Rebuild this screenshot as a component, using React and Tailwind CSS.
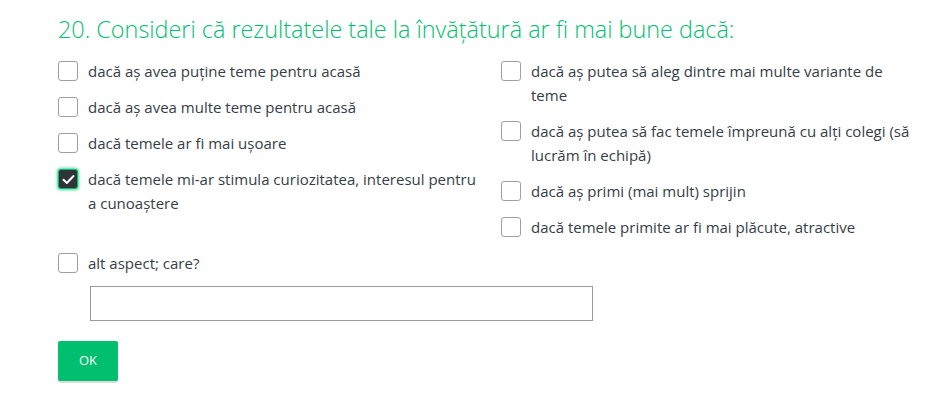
import { useState } from 'react';

const LEFT = [
  'dacă aș avea puține teme pentru acasă',
  'dacă aș avea multe teme pentru acasă',
  'dacă temele ar fi mai ușoare',
  'dacă temele mi-ar stimula curiozitatea, interesul pentru a cunoaștere',
];

const RIGHT = [
  'dacă aș putea să aleg dintre mai multe variante de teme',
  'dacă aș putea să fac temele împreună cu alți colegi (să lucrăm în echipă)',
  'dacă aș primi (mai mult) sprijin',
  'dacă temele primite ar fi mai plăcute, atractive',
];

function Option({ label, checked, onToggle }) {
  return (
    <label className="flex items-start cursor-pointer" onClick={onToggle}>
      <span
        className={`mt-[2px] w-5 h-5 shrink-0 rounded-[3px] flex items-center justify-center ${
          checked
            ? 'bg-[#2f3437] border border-[#00bf6f] shadow-[0_0_3px_1px_rgba(0,191,111,0.7)]'
            : 'bg-white border border-[#9da0a4]'
        }`}
      >
        {checked && (
          <svg width="13" height="11" viewBox="0 0 13 11" fill="none">
            <path d="M1.5 5.8L4.8 9L11.5 2" stroke="white" strokeWidth="2" strokeLinecap="round" strokeLinejoin="round" />
          </svg>
        )}
      </span>
      <span className="ml-[10px] text-[15px] leading-6 text-[#333e48]">{label}</span>
    </label>
  );
}

export default function App() {
  const [checked, setChecked] = useState({ 'L3': true });
  const [other, setOther] = useState('');

  const toggle = (key) => setChecked(prev => ({ ...prev, [key]: !prev[key] }));

  return (
    <div className="w-[927px] h-[408px] bg-white pl-[58px] pt-[15px]" style={{ fontFamily: '"Open Sans", "Noto Sans", sans-serif' }}>
      <h2 className="text-[23.4px] leading-7 font-light text-[#00bf6f]">
        20. Consideri că rezultatele tale la învățătură ar fi mai bune dacă:
      </h2>

      <div className="mt-[16px] flex">
        <div className="w-[443px] pr-[25px] flex flex-col gap-3">
          {LEFT.map((t, i) => (
            <Option key={i} label={t} checked={!!checked['L' + i]} onToggle={() => toggle('L' + i)} />
          ))}
        </div>
        <div className="w-[420px] flex flex-col gap-3">
          {RIGHT.map((t, i) => (
            <Option key={i} label={t} checked={!!checked['R' + i]} onToggle={() => toggle('R' + i)} />
          ))}
        </div>
      </div>

      <div className="mt-[12px]">
        <Option label="alt aspect; care?" checked={!!checked.other} onToggle={() => toggle('other')} />
      </div>

      <input
        type="text"
        value={other}
        onChange={(e) => setOther(e.target.value)}
        className="mt-[11px] ml-[32px] block w-[503px] h-[35px] border border-[#9b9b9b] px-2 text-[15px] outline-none"
      />

      <button className="mt-[20px] w-[60px] h-[40px] bg-[#00bf6f] text-white text-[13px] rounded-[2px] shadow-[0_2px_0_#dcdcdc]">
        OK
      </button>
    </div>
  );
}
